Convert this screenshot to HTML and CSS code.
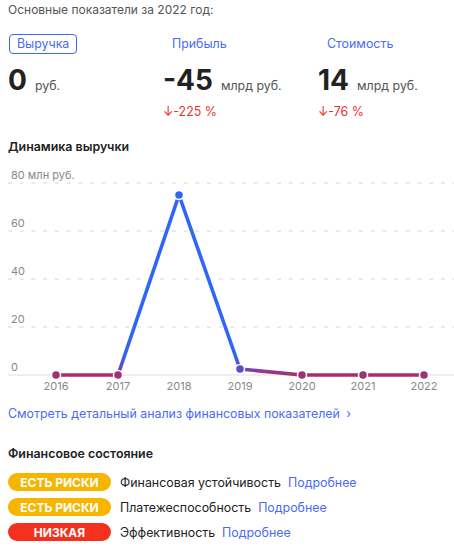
FILE: index.html
```html
<!DOCTYPE html>
<html lang="ru">
<head>
<meta charset="utf-8">
<link rel="stylesheet" href="styles.css">
</head>
<body>
<div class="page">
  <div class="title">Основные показатели за 2022 год:</div>
  <div class="metrics">
    <div class="metric">
      <div class="tab active">Выручка</div>
      <div class="value"><span class="num">0</span><span class="unit">руб.</span></div>
    </div>
    <div class="metric">
      <div class="tab">Прибыль</div>
      <div class="value"><span class="num">-45</span><span class="unit">млрд руб.</span></div>
      <div class="change">↓-225 %</div>
    </div>
    <div class="metric">
      <div class="tab">Стоимость</div>
      <div class="value"><span class="num">14</span><span class="unit">млрд руб.</span></div>
      <div class="change">↓-76 %</div>
    </div>
  </div>

  <div class="heading chart-heading">Динамика выручки</div>
  <svg class="chart" width="454" height="230" viewBox="0 0 454 230">
    <defs>
      <linearGradient id="lg" gradientUnits="userSpaceOnUse" x1="0" y1="209" x2="0" y2="17">
        <stop offset="0" stop-color="#b02c60"/>
        <stop offset="0.035" stop-color="#6a47c6"/>
        <stop offset="0.11" stop-color="#2f66f5"/>
        <stop offset="1" stop-color="#2f66f5"/>
      </linearGradient>
    </defs>
    <g stroke="#e4e4e4" stroke-width="1.3" stroke-dasharray="4 7.7">
      <line x1="8" y1="17" x2="454" y2="17"/>
      <line x1="8" y1="65" x2="454" y2="65"/>
      <line x1="8" y1="113" x2="454" y2="113"/>
      <line x1="8" y1="161" x2="454" y2="161"/>
    </g>
    <line x1="8" y1="209" x2="454" y2="209" stroke="#e8e8e8" stroke-width="1.3"/>
    <g class="ylab">
      <text x="11" y="13">80 млн руб.</text>
      <text x="11" y="61">60</text>
      <text x="11" y="109">40</text>
      <text x="11" y="157">20</text>
      <text x="11" y="205">0</text>
    </g>
    <g class="xlab" text-anchor="middle">
      <text x="56" y="224">2016</text>
      <text x="118" y="224">2017</text>
      <text x="179" y="224">2018</text>
      <text x="240" y="224">2019</text>
      <text x="302" y="224">2020</text>
      <text x="363" y="224">2021</text>
      <text x="424" y="224">2022</text>
    </g>
    <polyline points="56,209 118,209 179,29 240,203 302,209 363,209 424,209" fill="none" stroke="url(#lg)" stroke-width="3.6" stroke-linejoin="round"/>
    <g stroke="#fff" stroke-width="1.5">
      <circle cx="56" cy="209" r="4.5" fill="#9a3474"/>
      <circle cx="118" cy="209" r="4.5" fill="#9a3474"/>
      <circle cx="179" cy="29" r="4.5" fill="#2f66f5"/>
      <circle cx="240" cy="203" r="4.5" fill="#5a4ccc"/>
      <circle cx="302" cy="209" r="4.5" fill="#9a3474"/>
      <circle cx="363" cy="209" r="4.5" fill="#9a3474"/>
      <circle cx="424" cy="209" r="4.5" fill="#9a3474"/>
    </g>
  </svg>

  <a class="more-link">Смотреть детальный анализ финансовых показателей <span class="chev">›</span></a>

  <div class="heading state-heading">Финансовое состояние</div>
  <div class="states">
    <div class="state"><span class="badge warn">ЕСТЬ РИСКИ</span><span class="label">Финансовая устойчивость</span><a class="link">Подробнее</a></div>
    <div class="state"><span class="badge warn">ЕСТЬ РИСКИ</span><span class="label">Платежеспособность</span><a class="link">Подробнее</a></div>
    <div class="state"><span class="badge bad">НИЗКАЯ</span><span class="label">Эффективность</span><a class="link">Подробнее</a></div>
  </div>
</div>
</body>
</html>
```

FILE: styles.css
```css
* { box-sizing: border-box; }
html, body { margin: 0; padding: 0; background: #fff; }
body {
  font-family: Inter, "Noto Sans", "DejaVu Sans", sans-serif;
  font-size: 12.4px;
  color: #222;
}
.page { padding: 0 0 0 8px; width: 454px; }
.title { margin-top: 2px; line-height: 16px; color: #555; font-size: 12px; }

.metrics { display: grid; grid-template-columns: 155px 155px 144px; margin-top: 16px; }
.metric { display: flex; flex-direction: column; align-items: flex-start; }
.tab {
  height: 20px; line-height: 18px; padding: 0 8px;
  border: 1px solid transparent; border-radius: 4px;
  color: #4b6bf3;
}
.tab.active { border-color: #3a68f0; margin-left: 1px; padding: 0 7px; }
.value { margin-top: 10px; height: 32px; line-height: 32px; display: flex; align-items: baseline; }
.num { font-size: 28px; font-weight: 700; color: #222; }
.unit { margin-left: 8px; color: #555; font-size: 12.4px; }
.change { margin-top: 8px; line-height: 16px; color: #e8312a; }

.heading { font-weight: 600; line-height: 16px; color: #222; }
.chart-heading { margin-top: 19px; }
.chart { display: block; margin: 11px 0 0 -8px; }
.ylab text, .xlab text { font-size: 11px; fill: #888; font-family: Inter, "Noto Sans", sans-serif; }

.more-link { display: block; margin-top: 10px; line-height: 16px; color: #4b6bf3; }
.chev { margin-left: 3px; }

.state-heading { margin-top: 24px; }
.states { margin-top: 11px; display: flex; flex-direction: column; gap: 7px; }
.state { display: flex; align-items: center; height: 18px; }
.badge {
  width: 103px; height: 18px; border-radius: 9px;
  color: #fff; font-weight: 700; font-size: 12px;
  display: flex; align-items: center; justify-content: center;
}
.badge.warn { background: #f7b500; }
.badge.bad { background: #f2321e; }
.label { margin-left: 9px; color: #222; }
.link { margin-left: 7px; color: #4b6bf3; }
```
